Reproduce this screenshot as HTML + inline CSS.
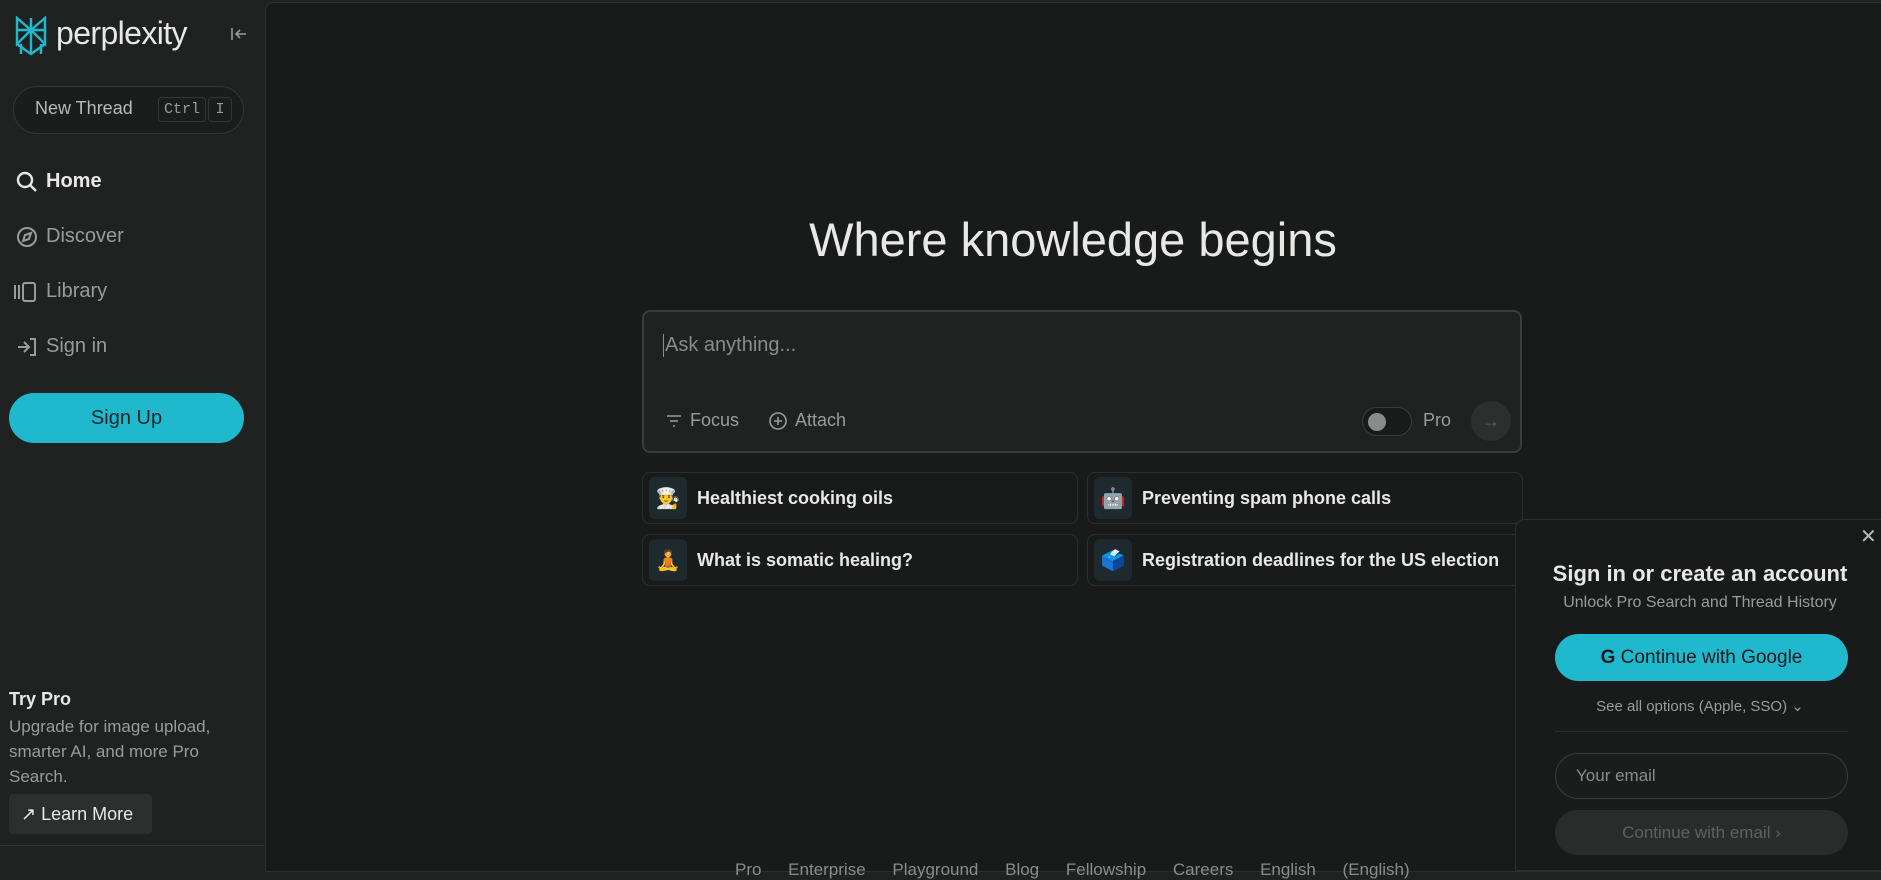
<!DOCTYPE html>
<html><head><meta charset="utf-8"><style>
*{box-sizing:border-box;margin:0;padding:0}
body{width:1881px;height:867px;overflow:hidden;background:#202222;font-family:"Liberation Sans",sans-serif;color:#e8e8e6;position:relative}
.abs{position:absolute}
.side{left:0;top:0;width:265px;height:867px;background:#202222}
.main{left:265px;top:2px;width:1620px;height:870px;background:#191a1a;border:1px solid #2d2f2f;border-radius:8px 0 0 0}
.nav{left:16px;font-size:20px;color:#9a9c9c;display:flex;align-items:center;gap:8px}
.card{height:52px;width:436px;border:1px solid #2d2f2f;border-radius:8px;display:flex;align-items:center;font-size:18px;color:#e8e8e6;font-weight:bold}
.emo{width:38px;height:42px;background:#1f2a2e;border-radius:6px;margin:0 10px 0 6px;display:flex;align-items:center;justify-content:center;font-size:20px}
</style></head><body>
<div class="abs side"></div>
<svg class="abs" style="left:14px;top:16px" width="34" height="40" viewBox="0 0 34 40" fill="none" stroke="#20b8cd" stroke-width="2.4"><path d="M3 2l14 12L31 2v12H3V2zM17 2v36M3 14v14l14-14 14 14V14M3 28l14 10 14-10M7 28v10M27 28v10"/></svg>
<div class="abs" style="left:56px;top:15px;font-size:32px;color:#e8e8e6;letter-spacing:-0.6px">perplexity</div>
<svg class="abs" style="left:230px;top:27px" width="18" height="14" viewBox="0 0 18 14" fill="none" stroke="#9a9c9c" stroke-width="1.6"><path d="M2 1v12M16 7H6M10 3L6 7l4 4"/></svg>
<div class="abs" style="left:13px;top:86px;width:231px;height:48px;border:1px solid #333636;border-radius:24px;background:#1b1c1c"></div>
<div class="abs" style="left:35px;top:98px;font-size:18px;color:#b8baba">New Thread</div>
<div class="abs" style="left:158px;top:97px;width:48px;height:25px;border:1px solid #333636;border-radius:4px;font:15px 'Liberation Mono',monospace;color:#9a9c9c;text-align:center;line-height:23px">Ctrl</div>
<div class="abs" style="left:208px;top:97px;width:24px;height:25px;border:1px solid #333636;border-radius:4px;font:15px 'Liberation Mono',monospace;color:#9a9c9c;text-align:center;line-height:23px">I</div>
<div class="abs nav" style="top:170px;color:#e8e8e6;font-weight:bold"><svg width="22" height="22" viewBox="0 0 22 22" fill="none" stroke="#e8e8e6" stroke-width="2.4"><circle cx="9" cy="9" r="7"/><path d="M14 14l6 6"/></svg>Home</div>
<div class="abs nav" style="top:225px"><svg width="22" height="22" viewBox="0 0 22 22" fill="none" stroke="#9a9c9c" stroke-width="2"><circle cx="11" cy="11" r="9"/><path d="M15 7l-2 6-6 2 2-6z"/></svg>Discover</div>
<div class="abs nav" style="top:280px;left:13px"><svg width="25" height="22" viewBox="0 0 25 22" fill="none" stroke="#9a9c9c" stroke-width="2"><path d="M2 4v14M6 4v14"/><rect x="10" y="2" width="12" height="18" rx="2"/></svg>Library</div>
<div class="abs nav" style="top:335px"><svg width="22" height="22" viewBox="0 0 22 22" fill="none" stroke="#9a9c9c" stroke-width="2"><path d="M2 11h10M8 6l5 5-5 5M14 3h5v16h-5"/></svg>Sign in</div>
<div class="abs" style="left:9px;top:393px;width:235px;height:50px;border-radius:25px;background:#20b8cd;color:#16272a;font-size:20px;text-align:center;line-height:50px">Sign Up</div>
<div class="abs" style="left:9px;top:689px;font-size:18px;font-weight:bold">Try Pro</div>
<div class="abs" style="left:9px;top:714px;font-size:17px;line-height:25px;color:#9a9c9c;width:240px">Upgrade for image upload, smarter AI, and more Pro Search.</div>
<div class="abs" style="left:9px;top:794px;width:143px;height:40px;background:#2d2f2f;border-radius:4px;font-size:18px;line-height:40px;padding-left:12px;color:#e8e8e6">↗ Learn More</div>
<div class="abs" style="left:0;top:845px;width:264px;height:1px;background:#333636"></div>
<div class="abs main"></div>
<div class="abs" style="left:265px;width:1616px;top:212px;text-align:center;font-size:47px;color:#e8e8e6">Where knowledge begins</div>
<div class="abs" style="left:642px;top:310px;width:880px;height:143px;border:2px solid #3a3d3d;border-radius:8px;background:#202222"></div>
<div class="abs" style="left:663px;top:334px;font-size:20px;color:#8a8c8c;border-left:1px solid #20b8cd;padding-left:1px">Ask anything...</div>
<div class="abs" style="left:666px;top:410px;font-size:18px;color:#9a9c9c;display:flex;align-items:center;gap:8px"><svg width="16" height="16" viewBox="0 0 16 16" stroke="#9a9c9c" stroke-width="1.6"><path d="M1 3h14M4 8h8M7 13h2"/></svg>Focus<span style="width:14px"></span><svg width="18" height="18" viewBox="0 0 18 18" fill="none" stroke="#9a9c9c" stroke-width="1.6"><circle cx="9" cy="9" r="8"/><path d="M9 5v8M5 9h8"/></svg>Attach</div>
<div class="abs" style="left:1362px;top:407px;width:50px;height:29px;border:1px solid #3a3d3d;border-radius:15px;background:#191a1a"><div style="position:absolute;left:5px;top:5px;width:18px;height:18px;border-radius:9px;background:#8a8c8c"></div></div>
<div class="abs" style="left:1423px;top:410px;font-size:18px;color:#9a9c9c">Pro</div>
<div class="abs" style="left:1471px;top:401px;width:40px;height:40px;border-radius:20px;background:#2d2f2f;color:#5f6262;text-align:center;line-height:40px;font-size:18px">→</div>
<div class="abs card" style="left:642px;top:472px"><div class="emo">👨‍🍳</div>Healthiest cooking oils</div>
<div class="abs card" style="left:1087px;top:472px"><div class="emo">🤖</div>Preventing spam phone calls</div>
<div class="abs card" style="left:642px;top:534px"><div class="emo">🧘</div>What is somatic healing?</div>
<div class="abs card" style="left:1087px;top:534px"><div class="emo">🗳️</div>Registration deadlines for the US election</div>
<div class="abs" style="left:735px;top:860px;font-size:17px;color:#8a8c8c;word-spacing:22px">Pro Enterprise Playground Blog Fellowship Careers English (English)</div>
<div class="abs" style="left:1515px;top:519px;width:370px;height:352px;background:#191a1a;border:1px solid #2d2f2f;border-radius:10px 0 0 0"></div>
<div class="abs" style="left:1860px;top:524px;font-size:20px;color:#b8baba">✕</div>
<div class="abs" style="left:1515px;width:370px;top:561px;text-align:center;font-size:22px;font-weight:bold">Sign in or create an account</div>
<div class="abs" style="left:1515px;width:370px;top:594px;text-align:center;font-size:16px;color:#9a9c9c">Unlock Pro Search and Thread History</div>
<div class="abs" style="left:1555px;top:634px;width:293px;height:47px;border-radius:24px;background:#20b8cd;color:#10191b;font-size:19px;text-align:center;line-height:47px"><b>G</b> Continue with Google</div>
<div class="abs" style="left:1515px;width:370px;top:697px;text-align:center;font-size:15px;color:#9a9c9c">See all options (Apple, SSO) ⌄</div>
<div class="abs" style="left:1555px;top:731px;width:293px;height:1px;background:#2d2f2f"></div>
<div class="abs" style="left:1555px;top:753px;width:293px;height:46px;border:1px solid #3a3d3d;border-radius:23px;background:#1b1c1c;font-size:17px;color:#8a8c8c;line-height:44px;padding-left:20px">Your email</div>
<div class="abs" style="left:1555px;top:810px;width:293px;height:45px;border-radius:23px;background:#2a2c2c;font-size:17px;color:#5f6262;line-height:45px;text-align:center">Continue with email ›</div>
</body></html>
